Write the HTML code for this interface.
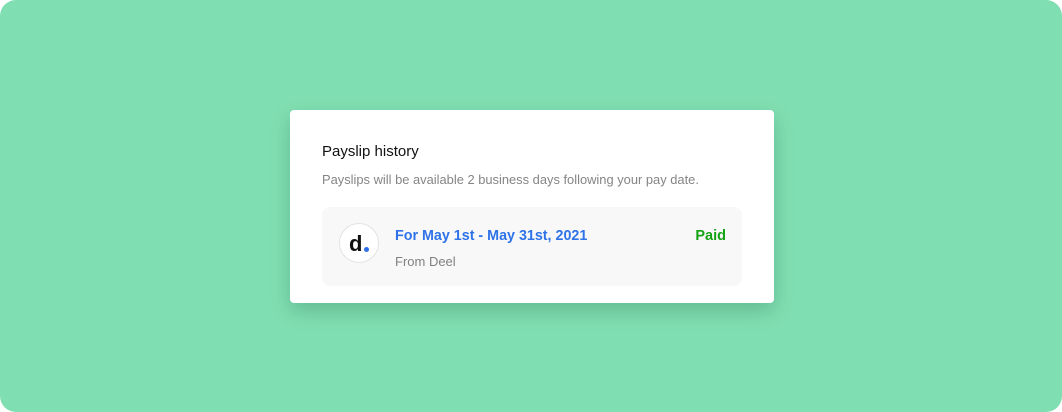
<!DOCTYPE html><html><head><style>
*{margin:0;padding:0;box-sizing:border-box}
body{width:1062px;height:412px;background:#fff;font-family:"Liberation Sans",sans-serif}
.bg{position:absolute;left:0;top:0;width:1062px;height:412px;background:#80dfb2;border-radius:16px}
.card{position:absolute;left:290px;top:110px;width:484px;height:193px;background:#fff;border-radius:4px;box-shadow:0 8px 20px rgba(0,60,30,.22)}
.t{position:absolute;left:32px;top:33px;font-size:15px;color:#111}
.s{position:absolute;left:32px;top:62px;font-size:12.9px;color:#858585}
.box{position:absolute;left:32px;top:97px;width:420px;height:79px;background:#f8f8f8;border-radius:8px}
.logo{position:absolute;left:17px;top:16px;width:40px;height:40px;border-radius:50%;border:1px solid #e3e3e3;background:#fff}
.logo span{position:absolute;left:9px;top:7px;font-size:22px;font-weight:bold;color:#111}
.logo i{position:absolute;left:24px;top:23px;width:5px;height:5px;border-radius:50%;background:#2f6ee8}
.b{position:absolute;left:73px;top:21px;font-size:14.3px;font-weight:bold;color:#2f73e8}
.f{position:absolute;left:73px;top:47px;font-size:13px;color:#808080}
.p{position:absolute;right:16px;top:21px;font-size:14.5px;font-weight:bold;color:#15a316}
</style></head><body><div class="bg"></div>
<div class="card"><div class="t">Payslip history</div>
<div class="s">Payslips will be available 2 business days following your pay date.</div>
<div class="box"><div class="logo"><span>d</span><i></i></div>
<div class="b">For May 1st - May 31st, 2021</div><div class="f">From Deel</div><div class="p">Paid</div></div></div>
</body></html>
